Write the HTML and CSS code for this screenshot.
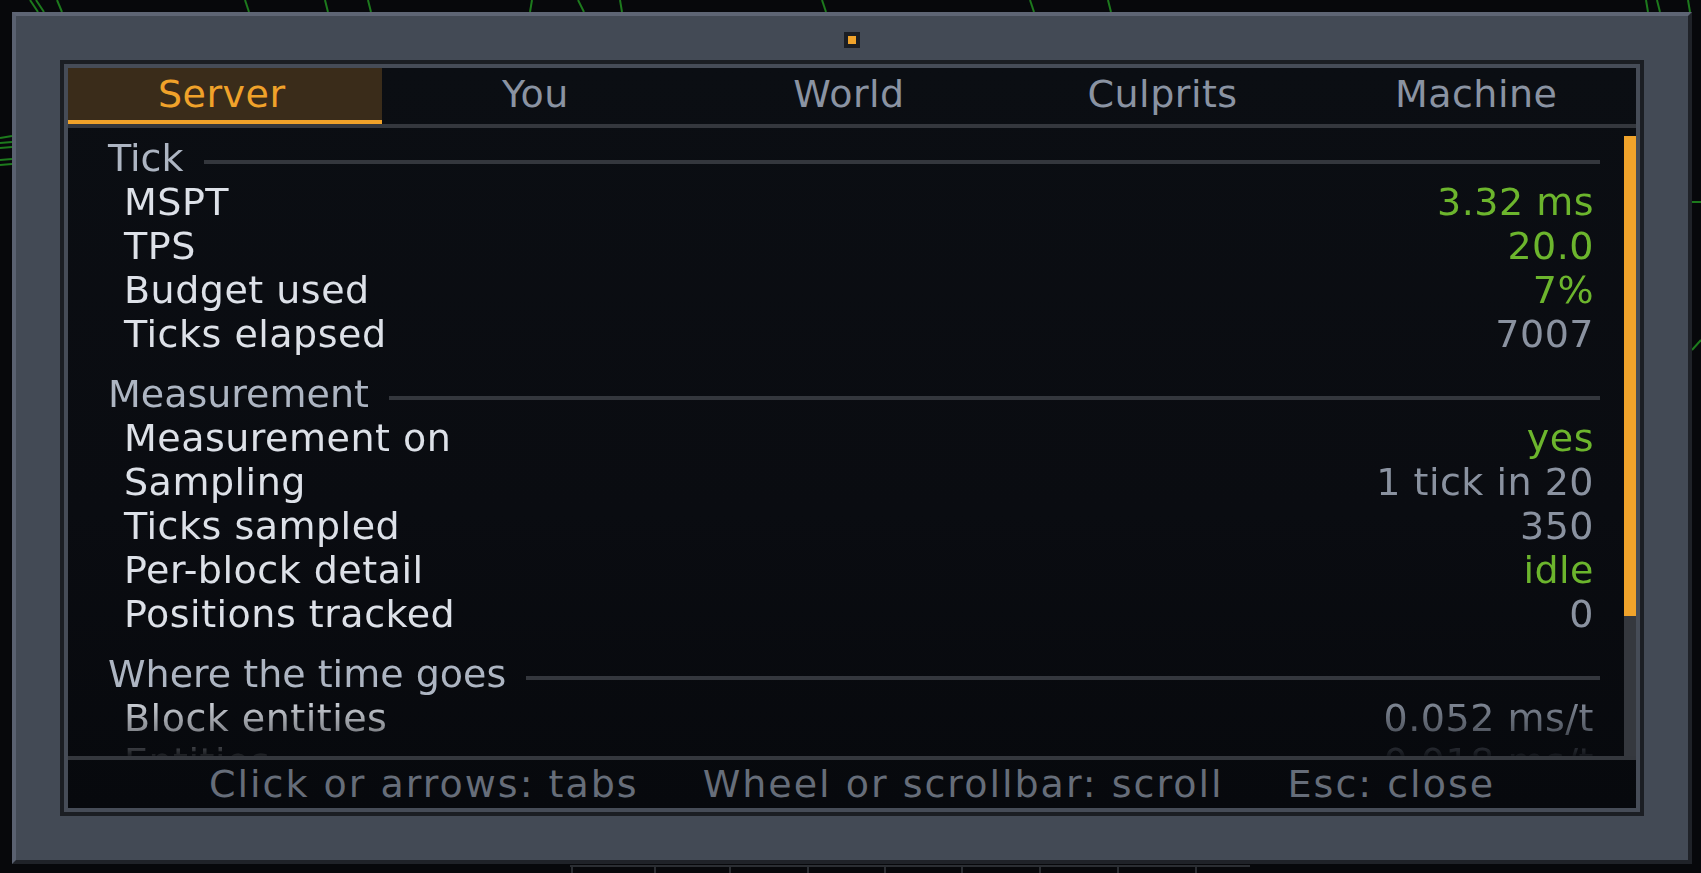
FILE: index.html
```html
<!DOCTYPE html>
<html lang="en">
<head>
<meta charset="utf-8">
<title>Server stats</title>
<link rel="stylesheet" href="styles.css">
</head>
<body>
<svg class="world" width="1701" height="873" viewBox="0 0 1701 873" aria-hidden="true">
  <g stroke="#1d7a1d" stroke-width="2" fill="none">
    <path d="M30 0 L38 12"/><path d="M36 0 L44 12"/><path d="M57 0 L62 12"/>
    <path d="M245 0 L249 12"/><path d="M325 0 L328 12"/><path d="M368 0 L371 12"/>
    <path d="M532 0 L530 12"/><path d="M578 0 L584 12"/><path d="M620 0 L622 12"/>
    <path d="M822 0 L826 12"/><path d="M1030 0 L1034 12"/><path d="M1108 0 L1111 12"/>
    <path d="M1646 0 L1648 12"/><path d="M1657 0 L1660 12"/><path d="M1688 0 L1690 12"/>
    <path d="M0 138 L12 136"/><path d="M0 143 L12 142"/><path d="M0 148 L12 147"/><path d="M0 160 L12 159"/><path d="M0 165 L12 164"/>
    <path d="M1692 202 L1701 202"/><path d="M1692 350 L1701 340"/>
  </g>
  <g stroke="#2b2e33" stroke-width="2" fill="none">
    <path d="M570 866 H1250"/>
    <path d="M572 866 V873"/><path d="M655 866 V873"/><path d="M730 866 V873"/><path d="M808 866 V873"/>
    <path d="M885 866 V873"/><path d="M962 866 V873"/><path d="M1040 866 V873"/><path d="M1118 866 V873"/><path d="M1196 866 V873"/>
  </g>
</svg>

<div class="panel">
  <div class="grip"><span class="grip-dot"></span></div>
  <div class="frame">
    <div class="frame-inner">
      <nav class="tabs">
        <div class="tab active">Server</div>
        <div class="tab">You</div>
        <div class="tab">World</div>
        <div class="tab">Culprits</div>
        <div class="tab">Machine</div>
      </nav>

      <div class="body">
        <div class="scroll">
          <section class="group">
            <div class="heading"><span>Tick</span><i class="rule"></i></div>
            <div class="row"><span class="label">MSPT</span><span class="val good">3.32 ms</span></div>
            <div class="row"><span class="label">TPS</span><span class="val good">20.0</span></div>
            <div class="row"><span class="label">Budget used</span><span class="val good">7%</span></div>
            <div class="row"><span class="label">Ticks elapsed</span><span class="val">7007</span></div>
          </section>
          <section class="group">
            <div class="heading"><span>Measurement</span><i class="rule"></i></div>
            <div class="row"><span class="label">Measurement on</span><span class="val good">yes</span></div>
            <div class="row"><span class="label">Sampling</span><span class="val">1 tick in 20</span></div>
            <div class="row"><span class="label">Ticks sampled</span><span class="val">350</span></div>
            <div class="row"><span class="label">Per-block detail</span><span class="val good">idle</span></div>
            <div class="row"><span class="label">Positions tracked</span><span class="val">0</span></div>
          </section>
          <section class="group">
            <div class="heading"><span>Where the time goes</span><i class="rule"></i></div>
            <div class="row"><span class="label">Block entities</span><span class="val">0.052 ms/t</span></div>
            <div class="row"><span class="label">Entities</span><span class="val">0.018 ms/t</span></div>
          </section>
        </div>
        <div class="scrollbar"><div class="thumb"></div><div class="track"></div></div>
      </div>

      <footer class="footer">
        <span>Click or arrows: tabs</span>
        <span>Wheel or scrollbar: scroll</span>
        <span>Esc: close</span>
      </footer>
    </div>
  </div>
</div>
</body>
</html>
```

FILE: styles.css
```css
* { box-sizing: border-box; }

html, body {
  margin: 0;
  padding: 0;
}

body {
  width: 1701px;
  height: 873px;
  overflow: hidden;
  background: #07080b;
  position: relative;
  padding: 12px 0 0 12px;
  font-family: "DejaVu Sans", "Liberation Sans", sans-serif;
  font-size: 38px;
}

.world {
  position: absolute;
  left: 0;
  top: 0;
}

.panel {
  position: relative;
  width: 1680px;
  height: 852px;
  background: #434a55;
  border-top: 4px solid #5e6574;
  border-left: 4px solid #5a6170;
  border-right: 4px solid #1f2228;
  border-bottom: 4px solid #1f2228;
  padding: 44px;
}

.grip {
  position: absolute;
  top: 16px;
  left: 50%;
  margin-left: -8px;
  width: 16px;
  height: 16px;
  background: #1b1e24;
  padding: 4px;
}

.grip-dot {
  display: block;
  width: 8px;
  height: 8px;
  background: #f0a32b;
}

.frame {
  width: 1584px;
  height: 756px;
  border: 4px solid #1b1e23;
}

.frame-inner {
  height: 100%;
  border: 4px solid #464c57;
  background: linear-gradient(to bottom, #0b0e13 0%, #0a0c11 60%, #07090d 100%);
  display: flex;
  flex-direction: column;
}

.tabs {
  display: flex;
  height: 60px;
  border-bottom: 4px solid #34373d;
}

.tab {
  flex: 1;
  height: 56px;
  line-height: 52px;
  text-align: center;
  color: #8a93a2;
  border-bottom: 4px solid transparent;
  padding-right: 6px;
  letter-spacing: 0.5px;
}

.tab.active {
  background: #3a2c1a;
  border-bottom-color: #f0a22a;
  color: #f0a22a;
}

.body {
  display: flex;
  height: 632px;
  border-bottom: 4px solid #34373d;
}

.scroll {
  flex: 1;
  overflow: hidden;
  padding: 8px 24px 0 40px;
  -webkit-mask-image: linear-gradient(to bottom, #000 0, #000 calc(100% - 60px), rgba(0,0,0,0.6) calc(100% - 26px), rgba(0,0,0,0.08) 100%);
  mask-image: linear-gradient(to bottom, #000 0, #000 calc(100% - 60px), rgba(0,0,0,0.6) calc(100% - 26px), rgba(0,0,0,0.08) 100%);
}

.group + .group {
  margin-top: 16px;
}

.heading {
  display: flex;
  align-items: center;
  gap: 20px;
  height: 44px;
  line-height: 44px;
  color: #adb5c2;
  white-space: nowrap;
}

.rule {
  flex: 1;
  height: 4px;
  margin-top: 8px;
  background: #34373d;
}

.row {
  display: flex;
  justify-content: space-between;
  height: 44px;
  line-height: 44px;
  padding: 0 6px 0 16px;
  white-space: nowrap;
  letter-spacing: 0.5px;
}

.label {
  color: #dde1e8;
}

.val {
  color: #8a92a0;
}

.val.good {
  color: #6cb52d;
}

.scrollbar {
  width: 12px;
  padding-top: 8px;
  display: flex;
  flex-direction: column;
}

.thumb {
  height: 480px;
  background: #f0a32b;
}

.track {
  flex: 1;
  background: #35383e;
}

.footer {
  height: 48px;
  display: flex;
  justify-content: center;
  align-items: center;
  gap: 64px;
  color: #666d79;
  line-height: 48px;
  white-space: nowrap;
  letter-spacing: 2px;
}
```
